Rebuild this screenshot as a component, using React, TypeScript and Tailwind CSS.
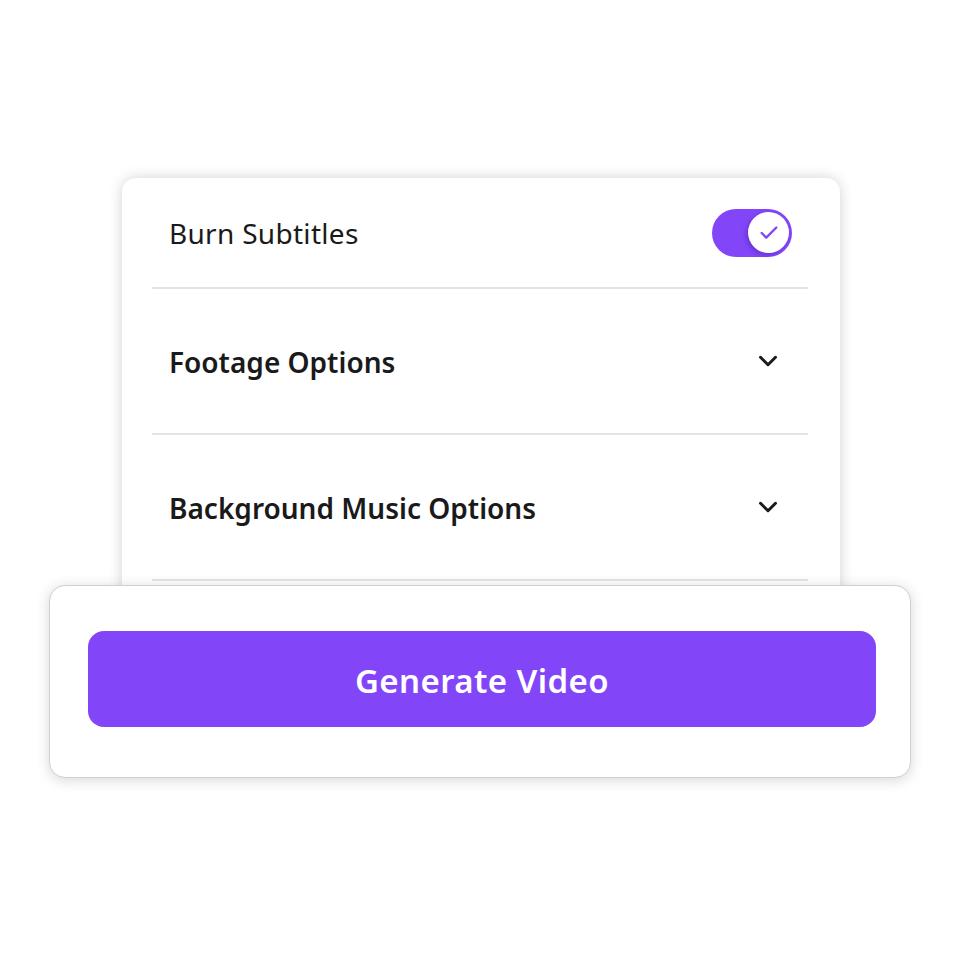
import { ChevronDown, Check } from 'lucide-react';

const rows = ['Footage Options', 'Background Music Options'];

export default function App() {
  return (
    <div
      className="w-[960px] h-[960px] bg-white overflow-hidden pt-[178px]"
      style={{ fontFamily: '"Noto Sans", "Open Sans", sans-serif' }}
    >
      {/* Settings card */}
      <div className="ml-[122px] w-[718px] h-[440px] bg-white rounded-[14px] shadow-[0_0_14px_rgba(0,0,0,0.18)] pl-[30px] pr-[32px]">
        <div className="h-[111px] flex items-center justify-between pl-[17px] pr-[16px] border-b-2 border-[#e4e4e4]">
          <span className="text-[28px] tracking-[0.3px] text-[#1a1a1a]">Burn Subtitles</span>
          <div className="w-[80px] h-[48px] rounded-full bg-[#8345f8] flex items-center justify-end pr-[3px]">
            <div className="w-[41px] h-[41px] rounded-full bg-white flex items-center justify-center shadow-[-2px_2px_4px_rgba(60,20,140,0.35)]">
              <Check className="w-[22px] h-[22px] text-[#8345f8]" strokeWidth={2.6} />
            </div>
          </div>
        </div>
        {rows.map((label) => (
          <div
            key={label}
            className="h-[146px] flex items-center justify-between pl-[17px] pr-[25px] border-b-2 border-[#e4e4e4]"
          >
            <span className="text-[28px] font-semibold text-[#1a1a1a] pt-[2px]">{label}</span>
            <ChevronDown className="w-[30px] h-[30px] text-[#1a1a1a]" strokeWidth={2.4} />
          </div>
        ))}
      </div>

      {/* Action card */}
      <div className="relative -mt-[33px] ml-[49px] w-[862px] h-[193px] bg-white rounded-[16px] border border-[#d0d0d0] shadow-[0_2px_14px_rgba(0,0,0,0.16)] pl-[38px] pr-[34px] pt-[45px]">
        <button className="w-full h-[96px] rounded-[16px] bg-[#8345f8] text-white text-[33px] tracking-[0.4px] font-semibold pt-[3px]">
          Generate Video
        </button>
      </div>
    </div>
  );
}
